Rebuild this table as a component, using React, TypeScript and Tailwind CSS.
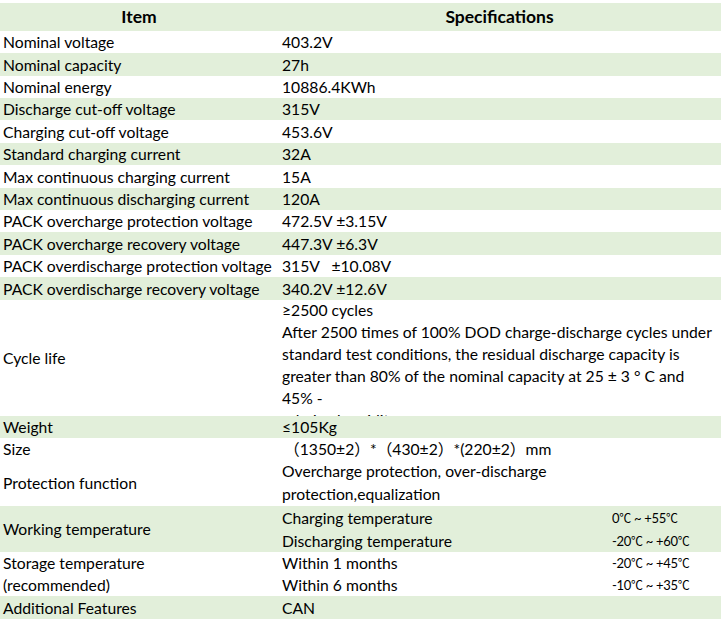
import React from "react";

const G = "bg-[#e2efda]";

type Row = { label: string; value: string; h: string; green: boolean };

const simple: Row[] = [
  { label: "Nominal voltage", value: "403.2V", h: "h-[22px]", green: false },
  { label: "Nominal capacity", value: "27h", h: "h-[23px]", green: true },
  { label: "Nominal energy", value: "10886.4KWh", h: "h-[22px]", green: false },
  { label: "Discharge cut-off voltage", value: "315V", h: "h-[22px]", green: true },
  { label: "Charging cut-off voltage", value: "453.6V", h: "h-[23px]", green: false },
  { label: "Standard charging current", value: "32A", h: "h-[22px]", green: true },
  { label: "Max continuous charging current", value: "15A", h: "h-[23px]", green: false },
  { label: "Max continuous discharging current", value: "120A", h: "h-[22px]", green: true },
  { label: "PACK overcharge protection voltage", value: "472.5V ±3.15V", h: "h-[22px]", green: false },
  { label: "PACK overcharge recovery voltage", value: "447.3V ±6.3V", h: "h-[23px]", green: true },
  { label: "PACK overdischarge protection voltage", value: "315V \u00a0\u00a0±10.08V", h: "h-[22px]", green: false },
  { label: "PACK overdischarge recovery voltage", value: "340.2V ±12.6V", h: "h-[23px]", green: true },
];

function Cell({ children, className = "" }: { children: React.ReactNode; className?: string }) {
  return <div className={`flex items-center whitespace-pre ${className}`}>{children}</div>;
}

function C() {
  return <span className="font-['Noto_Sans_CJK_SC'] text-[12px]">℃</span>;
}

function Temp({ a, b }: { a: string; b: string }) {
  return (
    <Cell className="pl-[3px] text-[13px] tracking-[-0.3px]">
      {a}
      <C /> ~ {b}
      <C />
    </Cell>
  );
}

export default function App() {
  return (
    <div
      className="w-[725px] h-[620px] bg-white text-black text-[15.7px] leading-[22px] pt-[3px]"
      style={{ fontFamily: "Lato, 'Noto Sans CJK SC', sans-serif" }}
    >
      <div className="w-[721px] grid grid-cols-[278px_443px]">
        {/* header */}
        <div className={`${G} h-[28px] flex items-center justify-center font-bold text-[17.5px]`}>Item</div>
        <div className={`${G} h-[28px] flex items-center justify-center font-bold text-[17.5px]`}>Specifications</div>

        {simple.map((r) => (
          <React.Fragment key={r.label}>
            <Cell className={`${r.h} pl-[3px] ${r.green ? G : ""}`}>{r.label}</Cell>
            <Cell className={`${r.h} pl-[4px] ${r.green ? G : ""}`}>{r.value}</Cell>
          </React.Fragment>
        ))}

        {/* cycle life */}
        <Cell className="h-[116px] pl-[3px]">Cycle life</Cell>
        <div className="h-[116px] overflow-hidden pl-[4px] whitespace-pre">
          <div className="-mt-[1px]">
            <div>≥2500 cycles</div>
            <div>After 2500 times of 100% DOD charge-discharge cycles under</div>
            <div>standard test conditions, the residual discharge capacity is</div>
            <div>greater than 80% of the nominal capacity at 25 ± 3 ° C and</div>
            <div>45% -</div>
            <div>relative humidity</div>
          </div>
        </div>

        <Cell className={`h-[22px] pl-[3px] ${G}`}>Weight</Cell>
        <Cell className={`h-[22px] pl-[4px] ${G}`}>≤105Kg</Cell>

        <Cell className="h-[22px] pl-[3px]">Size</Cell>
        <Cell className="h-[22px] pl-[6px]">（1350±2）*（430±2）*(220±2）mm</Cell>

        <Cell className="h-[46px] pl-[3px]">Protection function</Cell>
        <div className="h-[46px] pl-[4px] flex flex-col justify-center leading-[23px] whitespace-pre">
          <div>Overcharge protection, over-discharge</div>
          <div>protection,equalization</div>
        </div>

        <Cell className={`h-[46px] pl-[3px] ${G}`}>Working temperature</Cell>
        <div className={`h-[46px] ${G} grid grid-cols-[331px_112px] grid-rows-2`}>
          <Cell className="pl-[4px]">Charging temperature</Cell>
          <Temp a="0" b="+55" />
          <Cell className="pl-[4px]">Discharging temperature</Cell>
          <Temp a="-20" b="+60" />
        </div>

        <div className="h-[44px] pl-[3px] flex flex-col justify-center leading-[22px] whitespace-pre">
          <div>Storage temperature</div>
          <div>(recommended)</div>
        </div>
        <div className="h-[44px] grid grid-cols-[331px_112px] grid-rows-2">
          <Cell className="pl-[4px]">Within 1 months</Cell>
          <Temp a="-20" b="+45" />
          <Cell className="pl-[4px]">Within 6 months</Cell>
          <Temp a="-10" b="+35" />
        </div>

        <Cell className={`h-[23px] pl-[3px] ${G}`}>Additional Features</Cell>
        <Cell className={`h-[23px] pl-[4px] ${G}`}>CAN</Cell>
      </div>
    </div>
  );
}
